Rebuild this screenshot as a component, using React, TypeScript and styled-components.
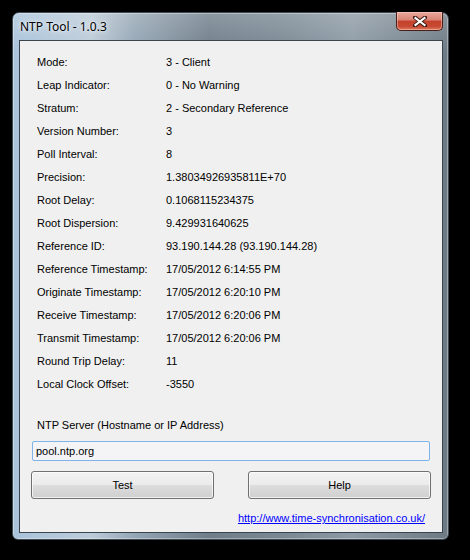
import { Fragment } from "react";
import styled, { createGlobalStyle } from "styled-components";

const GlobalStyle = createGlobalStyle`
  html, body {
    margin: 0;
    padding: 0;
    background: #000;
  }
  body {
    font-family: "Liberation Sans", Arial, sans-serif;
    font-size: 11px;
  }
`;

const Desktop = styled.div`
  width: 470px;
  height: 560px;
  box-sizing: border-box;
  padding: 12px 21px 20px 12px;
  background: #000;
`;

const Window = styled.div`
  width: 437px;
  height: 528px;
  box-sizing: border-box;
  display: flex;
  flex-direction: column;
  padding: 0 5px 6px 6px;
  border-radius: 7px 7px 6px 6px;
  border: 1px solid #3d4a54;
  background:
    linear-gradient(to bottom, rgba(255,255,255,0.2), rgba(255,255,255,0) 40px),
    linear-gradient(to right, #a9c3db 0%, #bccbd8 18%, #94a5b4 28%, #6f7e8a 45%, #7a8893 62%, #8d9aa5 78%, #6d7a84 100%);
  box-shadow: inset 0 0 0 1px rgba(255,255,255,0.35);
`;

const TitleBar = styled.div`
  height: 27px;
  display: flex;
  align-items: flex-start;
  justify-content: space-between;
`;

const Title = styled.span`
  font-family: "Noto Sans", "Liberation Sans", sans-serif;
  font-size: 12px;
  color: #000;
  padding: 5px 0 0 1px;
  text-shadow: 0 0 6px rgba(255,255,255,0.9), 0 0 3px rgba(255,255,255,0.8);
`;

const CloseButton = styled.div`
  width: 47px;
  height: 19px;
  box-sizing: border-box;
  margin-top: -1px;
  display: flex;
  align-items: center;
  justify-content: center;
  border: 1px solid #4a1f18;
  border-top: none;
  border-radius: 0 0 5px 5px;
  background: linear-gradient(to bottom, #e9a99c 0%, #d98373 45%, #c4402a 50%, #c84a34 80%, #dd7a5c 100%);
  box-shadow: inset 0 0 0 1px rgba(255,220,210,0.45);
`;

const Client = styled.div`
  flex: 1;
  display: flex;
  flex-direction: column;
  background: #f0f0f0;
  border: 1px solid #39444c;
  padding: 9px 13px 0 11px;
`;

const InfoGrid = styled.div`
  display: grid;
  grid-template-columns: 129px auto;
  grid-auto-rows: 23px;
  align-items: center;
  padding-left: 6px;
`;

const Label = styled.span`
  color: #000;
`;

const Value = styled.span`
  color: #000;
`;

const ServerLabel = styled.div`
  margin-top: 23px;
  padding-left: 6px;
  height: 14px;
  line-height: 14px;
`;

const ServerInput = styled.input`
  margin-top: 9px;
  height: 20px;
  box-sizing: border-box;
  width: 398px;
  margin-left: 1px;
  border: 1px solid #7eb4ea;
  border-radius: 2px;
  background: #f4f4f6;
  padding: 0 3px;
  font-family: "Liberation Sans", Arial, sans-serif;
  font-size: 11px;
  color: #000;
  outline: none;
`;

const ButtonRow = styled.div`
  margin-top: 10px;
  display: flex;
  justify-content: space-between;
  width: 400px;
`;

const Button = styled.button`
  width: 183px;
  height: 28px;
  border: 1px solid #707070;
  border-radius: 3px;
  background: linear-gradient(to bottom, #f2f2f2 0%, #ebebeb 50%, #dddddd 51%, #cfcfcf 100%);
  box-shadow: inset 0 0 0 1px rgba(255,255,255,0.7);
  font-family: "Liberation Sans", Arial, sans-serif;
  font-size: 11px;
  color: #000;
  padding: 0;
`;

const LinkRow = styled.div`
  margin-top: 13px;
  display: flex;
  justify-content: flex-end;
  width: 394px;
`;

const Link = styled.a`
  color: #0000ff;
  text-decoration: underline;
  font-size: 11px;
`;

const rows: [string, string][] = [
  ["Mode:", "3 - Client"],
  ["Leap Indicator:", "0 - No Warning"],
  ["Stratum:", "2 - Secondary Reference"],
  ["Version Number:", "3"],
  ["Poll Interval:", "8"],
  ["Precision:", "1.38034926935811E+70"],
  ["Root Delay:", "0.1068115234375"],
  ["Root Dispersion:", "9.429931640625"],
  ["Reference ID:", "93.190.144.28 (93.190.144.28)"],
  ["Reference Timestamp:", "17/05/2012 6:14:55 PM"],
  ["Originate Timestamp:", "17/05/2012 6:20:10 PM"],
  ["Receive Timestamp:", "17/05/2012 6:20:06 PM"],
  ["Transmit Timestamp:", "17/05/2012 6:20:06 PM"],
  ["Round Trip Delay:", "11"],
  ["Local Clock Offset:", "-3550"],
];

function CloseIcon() {
  return (
    <svg width="14" height="11" viewBox="0 0 14 11">
      <path d="M2 1.5 L12 9.5 M12 1.5 L2 9.5" stroke="#3a1a14" strokeWidth="4" strokeLinecap="square" />
      <path d="M2.5 2 L11.5 9 M11.5 2 L2.5 9" stroke="#fff" strokeWidth="2.2" strokeLinecap="square" />
    </svg>
  );
}

export default function App() {
  return (
    <>
      <GlobalStyle />
      <Desktop>
        <Window>
          <TitleBar>
            <Title>NTP Tool - 1.0.3</Title>
            <CloseButton>
              <CloseIcon />
            </CloseButton>
          </TitleBar>
          <Client>
            <InfoGrid>
              {rows.map(([label, value]) => (
                <Fragment key={label}>
                  <Label>{label}</Label>
                  <Value>{value}</Value>
                </Fragment>
              ))}
            </InfoGrid>
            <ServerLabel>NTP Server (Hostname or IP Address)</ServerLabel>
            <ServerInput defaultValue="pool.ntp.org" />
            <ButtonRow>
              <Button>Test</Button>
              <Button>Help</Button>
            </ButtonRow>
            <LinkRow>
              <Link href="#">http://www.time-synchronisation.co.uk/</Link>
            </LinkRow>
          </Client>
        </Window>
      </Desktop>
    </>
  );
}
